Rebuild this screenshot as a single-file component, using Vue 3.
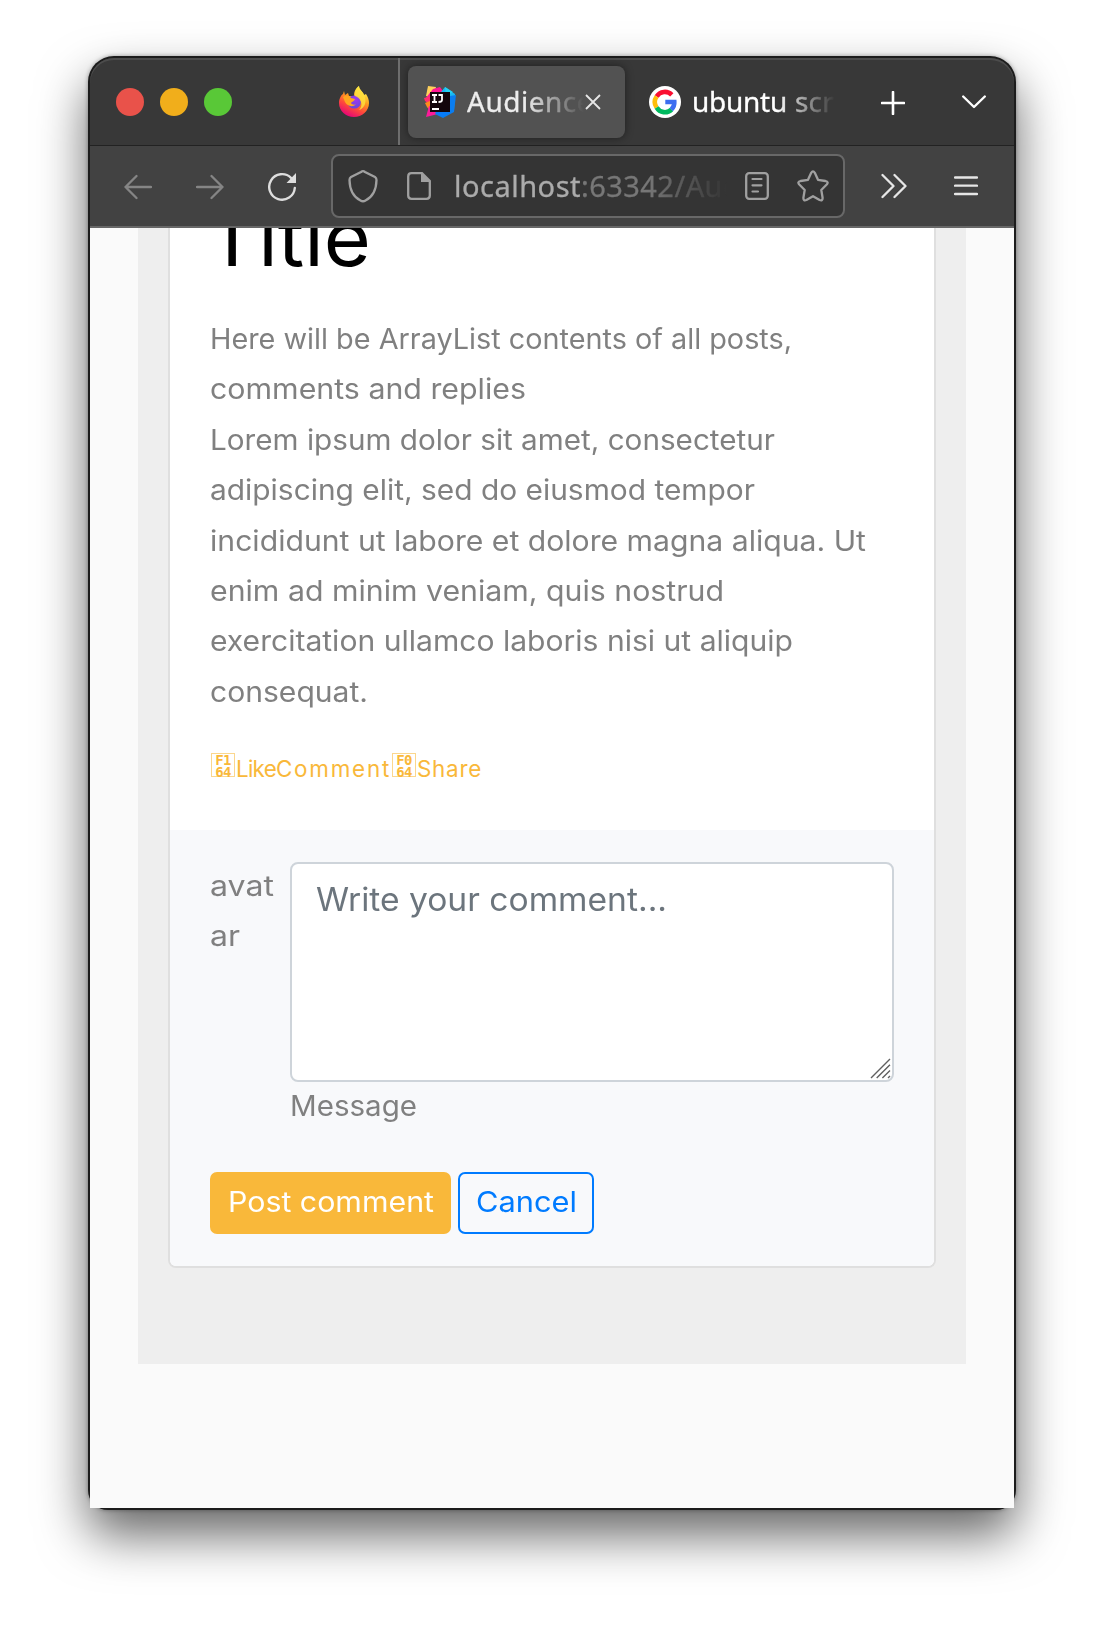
<script setup>
// Adjusts tracking so that a run of text takes up the given width.
const vFit = {
  mounted(el, { value }) {
    const natural = el.getBoundingClientRect().width
    el.style.letterSpacing = (value - natural) / el.textContent.length + 'px'
  },
}

const vStretch = {
  mounted(el, { value }) {
    const natural = el.getBoundingClientRect().width
    el.style.transform = `scaleX(${value / natural})`
  },
}

const lines = [
  ['Here will be ArrayList contents of all posts,', 582],
  ['comments and replies', 316],
  ['Lorem ipsum dolor sit amet, consectetur', 565],
  ['adipiscing elit, sed do eiusmod tempor', 545],
  ['incididunt ut labore et dolore magna aliqua. Ut', 656],
  ['enim ad minim veniam, quis nostrud', 514],
  ['exercitation ullamco laboris nisi ut aliquip', 583],
  ['consequat.', 158],
]
</script>

<template>
  <div class="desktop">
    <div class="window">
      <header class="tabbar">
        <div class="lights"><i class="red"></i><i class="yellow"></i><i class="green"></i></div>
        <div class="pinned">
          <svg width="30" height="32" viewBox="0 0 30 32">
            <defs>
              <linearGradient id="fx" x1=".8" y1="0" x2=".3" y2="1">
                <stop offset=".1" stop-color="#fff44f" /><stop offset=".4" stop-color="#ffa01e" />
                <stop offset=".68" stop-color="#ff4a3a" /><stop offset="1" stop-color="#e4007c" />
              </linearGradient>
              <radialGradient id="globe" cx=".6" cy=".3" r=".8">
                <stop offset="0" stop-color="#a238f0" /><stop offset="1" stop-color="#5a4bd8" />
              </radialGradient>
            </defs>
            <path fill="url(#fx)" d="M5 5L6 9L9 7L10 10L15 10C15 5 17 2 20 0C20 4 24 5 25 9L27 8C29 11 30 14 30 17C30 25 23 31 15 31C7 31 0 25 0 17C0 13 2 9 4 8Z" />
            <circle cx="15.3" cy="16" r="6.6" fill="url(#globe)" />
            <path fill="#ffa51f" d="M4 11C7 9 10 9 12 12L16 13C15 16 13 15 12 17C13 19 16 19 17 18C14 22 8 20 6 16Z" />
            <path fill="#ffdf3c" d="M20 0C20 4 25 6 26 11C28 18 24 23 20 24C24 20 23 14 18 11L16 10C16 5 17 3 20 0Z" opacity=".85" />
          </svg>
        </div>
        <div class="tab active">
          <svg width="32" height="32" viewBox="0 0 32 32">
            <path fill="#ffd05b" d="M4 0L12 1L9 12L2 10Z" /><path fill="#ff1795" d="M9 3L16 1L21 8L17 16L1 13Z" />
            <path fill="#ff2d6f" d="M0 12L8 10V20L1 15Z" /><path fill="#ff8a1e" d="M1 17L8 14L7 26L3 21Z" />
            <path fill="#fc1a9a" d="M5 20L16 24L14 28L2 31Z" /><path fill="#18b9f2" d="M21 1L31 8L30 24L20 20L17 6Z" />
            <path fill="#0a7df0" d="M26 10L32 9L30 26L19 32L11 28L16 20Z" /><path fill="#23d2f7" d="M21 1L29 6L22 10Z" />
            <path fill="#087cfa" d="M11 26H27L18 31Z" />
            <path fill="#13060c" d="M6 6H26V26H6Z" />
            <path fill="none" stroke="#fff" stroke-width="1.8" d="M8 9H13M10.500 9V15.500M8 16H13M14.500 9H18V14Q18 16 14.500 16M8 23H15" />
          </svg>
          <div class="label fade-active"><span v-fit="126">Audience</span></div>
          <svg class="close" width="16" height="16" viewBox="0 0 16 16"><path d="M1 1L15 15M15 1L1 15" fill="none" stroke="#e6e6e6" stroke-width="1.800" /></svg>
        </div>
        <div class="tab second">
          <svg width="32" height="32" viewBox="0 0 32 32">
            <circle cx="16" cy="16" r="16" fill="#fff" />
            <g fill="none" stroke-width="4.600">
              <path stroke="#fa0f32" d="M7.600 10.500A9.700 9.700 0 0 1 22.800 8.800" />
              <path stroke="#ffbe0a" d="M7.600 21.500A9.700 9.700 0 0 1 7.600 10.500" />
              <path stroke="#00b95f" d="M22.600 23.500A9.700 9.700 0 0 1 7.600 21.500" />
              <path stroke="#3c6df0" d="M16.300 16H25.300A9.700 9.700 0 0 1 22.300 23.700" />
            </g>
          </svg>
          <div class="label fade-second"><span v-fit="95">ubuntu</span><span class="gap"></span><span v-fit="39">scr</span></div>
        </div>
        <svg class="plus" width="24" height="24" viewBox="0 0 24 24"><path d="M1 12H23M12 1V23" stroke="#fff" stroke-width="2.600" stroke-linecap="round" /></svg>
        <svg class="down" width="24" height="14" viewBox="0 0 24 14"><path d="M1.200 1.500L12 12L22.800 1.500" fill="none" stroke="#fff" stroke-width="2.400" stroke-linecap="round" stroke-linejoin="round" /></svg>
      </header>

      <nav class="toolbar">
        <svg class="back" width="28" height="26" viewBox="0 0 28 26"><path d="M27 13H1.500M12.500 2L1.500 13L12.500 24" fill="none" stroke="#858585" stroke-width="2.300" stroke-linecap="round" stroke-linejoin="round" /></svg>
        <svg class="forward" width="28" height="26" viewBox="0 0 28 26"><path d="M1 13H26.500M15.500 2L26.500 13L15.500 24" fill="none" stroke="#858585" stroke-width="2.300" stroke-linecap="round" stroke-linejoin="round" /></svg>
        <svg class="reload" width="28" height="30" viewBox="0 0 28 30"><path d="M26.800 16A12.800 12.800 0 1 1 23 5.800" fill="none" stroke="#dedede" stroke-width="2.400" stroke-linecap="round" /><path d="M28 1V11H18.500Z" fill="#dedede" /></svg>
        <div class="urlbar">
          <svg class="shield" width="30" height="34" viewBox="0 0 30 34"><path d="M15 2.200Q16 2.200 17 3L27 8Q28.500 9 28.500 11C28.300 21 24.500 28 17.500 31.500Q15 33 12.500 31.500C5.500 28 1.700 21 1.500 11Q1.500 9 3 8L13 3Q14 2.200 15 2.200Z" fill="none" stroke="#a0a0a0" stroke-width="2.300" /></svg>
          <svg class="doc" width="24" height="28" viewBox="0 0 24 28"><path d="M4.500 1.200H15L22.800 9V23.500Q22.800 26.800 19.500 26.800H4.500Q1.200 26.800 1.200 23.500V4.500Q1.200 1.200 4.500 1.200Z" fill="none" stroke="#a0a0a0" stroke-width="2.300" /><path d="M14 1L23.500 10H14Z" fill="#a0a0a0" /></svg>
          <div class="url"><span class="host" v-fit="127">localhost</span><span v-fit="142">:63342/Au</span><span>d</span></div>
          <svg class="reader" width="24" height="28" viewBox="0 0 24 28"><rect x="1.200" y="1.200" width="21.600" height="25.600" rx="3" fill="none" stroke="#a0a0a0" stroke-width="2.300" /><path d="M7.500 7H16.500M7.500 13.300H16.500M7.500 19.500H13" stroke="#a0a0a0" stroke-width="2.200" stroke-linecap="round" /></svg>
          <svg class="star" width="32" height="32" viewBox="0 0 32 32"><path d="M14.200 2.800Q16 0 17.800 2.800L21 9.800L28.500 11Q32 11.800 29.700 14.500L24.300 20L25.600 27.700Q25.800 31.200 22.600 30L16 26.200L9.400 30Q6.200 31.200 6.400 27.700L7.700 20L2.300 14.500Q0 11.800 3.500 11L11 9.800Z" fill="none" stroke="#a0a0a0" stroke-width="2.300" stroke-linejoin="round" /></svg>
        </div>
        <svg class="more" width="26" height="26" viewBox="0 0 26 26"><path d="M1.500 2L12.500 13L1.500 24M13.500 2L24.500 13L13.500 24" fill="none" stroke="#e6e6e6" stroke-width="2.300" stroke-linecap="round" stroke-linejoin="round" /></svg>
        <svg class="menu" width="24" height="20" viewBox="0 0 24 20"><path d="M1 1.500H23M1 9.700H23M1 18H23" stroke="#e6e6e6" stroke-width="2.300" stroke-linecap="round" /></svg>
      </nav>

      <main class="page">
        <section class="band">
          <article class="card">
            <div class="body">
              <h1><span v-stretch="165">Title</span></h1>
              <p class="copy"><span v-for="[text, width] in lines" :key="text" class="line"><span v-stretch="width">{{ text }}</span></span></p>
              <div class="links">
                <a><span class="hex"><b>F1</b><b>64</b></span><span v-fit="40">Like</span></a>
                <a><span v-fit="115">Comment</span></a>
                <a><span class="hex"><b>F0</b><b>64</b></span><span v-fit="65">Share</span></a>
              </div>
            </div>
            <footer class="reply">
              <div class="row">
                <div class="avatar"><span v-stretch="64">avat</span><br /><span v-stretch="30">ar</span></div>
                <div class="field">
                  <div class="textarea">
                    <span v-stretch="351">Write your comment...</span>
                    <svg class="grip" width="21" height="21" viewBox="0 0 21 21"><path d="M1 20L20 1M6.700 20L20 6.700M12.400 20L20 12.400M18 20L20 18" stroke="#606060" stroke-width="1.400" /></svg>
                  </div>
                  <label><span v-stretch="127">Message</span></label>
                </div>
              </div>
              <div class="actions">
                <button class="post"><span v-stretch="206">Post comment</span></button>
                <button class="cancel"><span v-stretch="101">Cancel</span></button>
              </div>
            </footer>
          </article>
        </section>
      </main>
    </div>
  </div>
</template>

<style>
body { margin: 0; background: #fff; }
</style>

<style scoped>
* { box-sizing: border-box; }
svg { display: block; flex: none; }
span { white-space: nowrap; transform-origin: 0 50%; }
.desktop { width: 1104px; height: 1630px; padding: 56px 88px; overflow: hidden; background: #fff; font-family: Inter, "Open Sans", sans-serif; }
.window { width: 928px; height: 1454px; padding: 2px; background: #1c1c1c; border-radius: 26px 26px 20px 20px; box-shadow: 0 25px 50px rgba(0, 0, 0, .6), 0 0 4px rgba(0, 0, 0, .35); }

.tabbar { display: flex; align-items: center; height: 88px; background: #383838; border-radius: 24px 24px 0 0; border-bottom: 1px solid #222; box-shadow: inset 0 2px #4c4c4c; font-family: "Noto Sans", sans-serif; font-size: 28px; line-height: 40px; color: #fff; }
.lights { display: flex; gap: 16px; margin-left: 26px; width: 223px; }
.lights i { width: 28px; height: 28px; border-radius: 50%; }
.red { background: #e9524a; }
.yellow { background: #f1ae1b; }
.green { background: #59c837; }
.pinned { display: flex; align-items: center; width: 61px; height: 87px; border-right: 2px solid #6e6e6e; }
.tab { display: flex; align-items: center; height: 72px; }
.active { width: 217px; margin-left: 8px; padding-left: 16px; border-radius: 8px; background: #525252; box-shadow: 0 0 8px rgba(0, 0, 0, .45); }
.label { overflow: hidden; white-space: nowrap; margin-top: -2px; -webkit-text-stroke: .3px currentColor; }
.label span { display: inline-block; }
.fade-active { width: 117px; margin-left: 11px; color: #ececec; -webkit-mask-image: linear-gradient(90deg, #000 50%, transparent 100%); mask-image: linear-gradient(90deg, #000 50%, transparent 100%); }
.close { margin-left: 1px; }
.second { margin-left: 24px; width: 190px; }
.fade-second { width: 146px; margin-left: 11px; -webkit-mask-image: linear-gradient(90deg, #000 58%, transparent 98%); mask-image: linear-gradient(90deg, #000 58%, transparent 98%); }
.label .gap { width: 8px; }
.plus { margin: 2px 0 0 42px; }
.down { margin-left: 57px; }

.toolbar { display: flex; align-items: center; height: 82px; background: #424242; border-bottom: 2px solid #676767; }
.back { margin-left: 34px; margin-top: 2px; }
.forward { margin-left: 44px; margin-top: 2px; }
.reload { margin-left: 44px; margin-top: 2px; }
.urlbar { display: flex; align-items: center; width: 514px; height: 64px; margin-left: 35px; border: 2px solid #686868; border-radius: 8px; background: #343434; }
.shield { margin-left: 15px; }
.doc { margin-left: 29px; }
.url { width: 276px; margin-left: 23px; overflow: hidden; white-space: nowrap; font: 29px/44px "Noto Sans", sans-serif; color: #777; -webkit-text-stroke: .3px currentColor; -webkit-mask-image: linear-gradient(90deg, #000 70%, transparent 99%); mask-image: linear-gradient(90deg, #000 70%, transparent 99%); }
.url span { display: inline-block; }
.host { color: #ababab; }
.reader { margin-left: 15px; }
.star { margin-left: 28px; }
.more { margin-left: 36px; }
.menu { margin-left: 47px; margin-top: -1px; }

.page { height: 1280px; padding: 0 48px; overflow: hidden; background: #fafafa; }
.band { height: 1136px; padding: 0 30px; background: #eee; }
.card { height: 1040px; border: 2px solid #dfdfdf; border-top: 0; border-radius: 0 0 8px 8px; background: #fff; overflow: hidden; color: gray; font-size: 28px; line-height: 50.4px; }
.body { height: 602px; padding: 0 40px; overflow: hidden; }
h1 { margin: -38.400px 0 28.400px -4px; font-size: 78px; font-weight: 400; line-height: 96px; color: #000; }
h1 span, .line span, .avatar span, .links span, .field span, button span { display: inline-block; }
.copy { margin: 0; }
.line { display: block; height: 50.400px; }
.links { display: flex; margin-top: 31.600px; font-size: 22.400px; line-height: 40px; color: #f9b83a; }
.links a { display: flex; align-items: center; }
.links .hex { display: flex; flex-direction: column; align-items: center; width: 24px; height: 24px; margin: -7px 1px 0 1px; border: 1px solid #fbd78e; font: 14px/12px "DejaVu Sans Mono", monospace; letter-spacing: -.6px; }
.hex b { display: block; height: 12px; position: relative; top: -.5px; }
.reply { height: 436px; padding: 32px 40px; background: #f8f9fb; }
.row { display: flex; height: 310px; }
.avatar { width: 80px; margin-top: -1px; }
.field { width: 604px; }
.textarea { position: relative; height: 220px; padding: 12px 24px; border: 2px solid #ced4da; border-radius: 8px; background: #fff; color: #6c757d; font-size: 32px; line-height: 48px; }
.grip { position: absolute; right: 1px; bottom: 1px; }
label { display: block; margin-top: -1.400px; }
.actions { display: flex; gap: 7px; }
button { display: flex; align-items: center; height: 62px; padding: 0 16px 2px; border: 2px solid #f9b83a; border-radius: 7px; font: 28px/42px Inter, "Open Sans", sans-serif; }
.post { width: 241px; background: #f9b83a; color: #fff; }
.cancel { width: 136px; background: transparent; border-color: #007bff; color: #007bff; }
</style>
